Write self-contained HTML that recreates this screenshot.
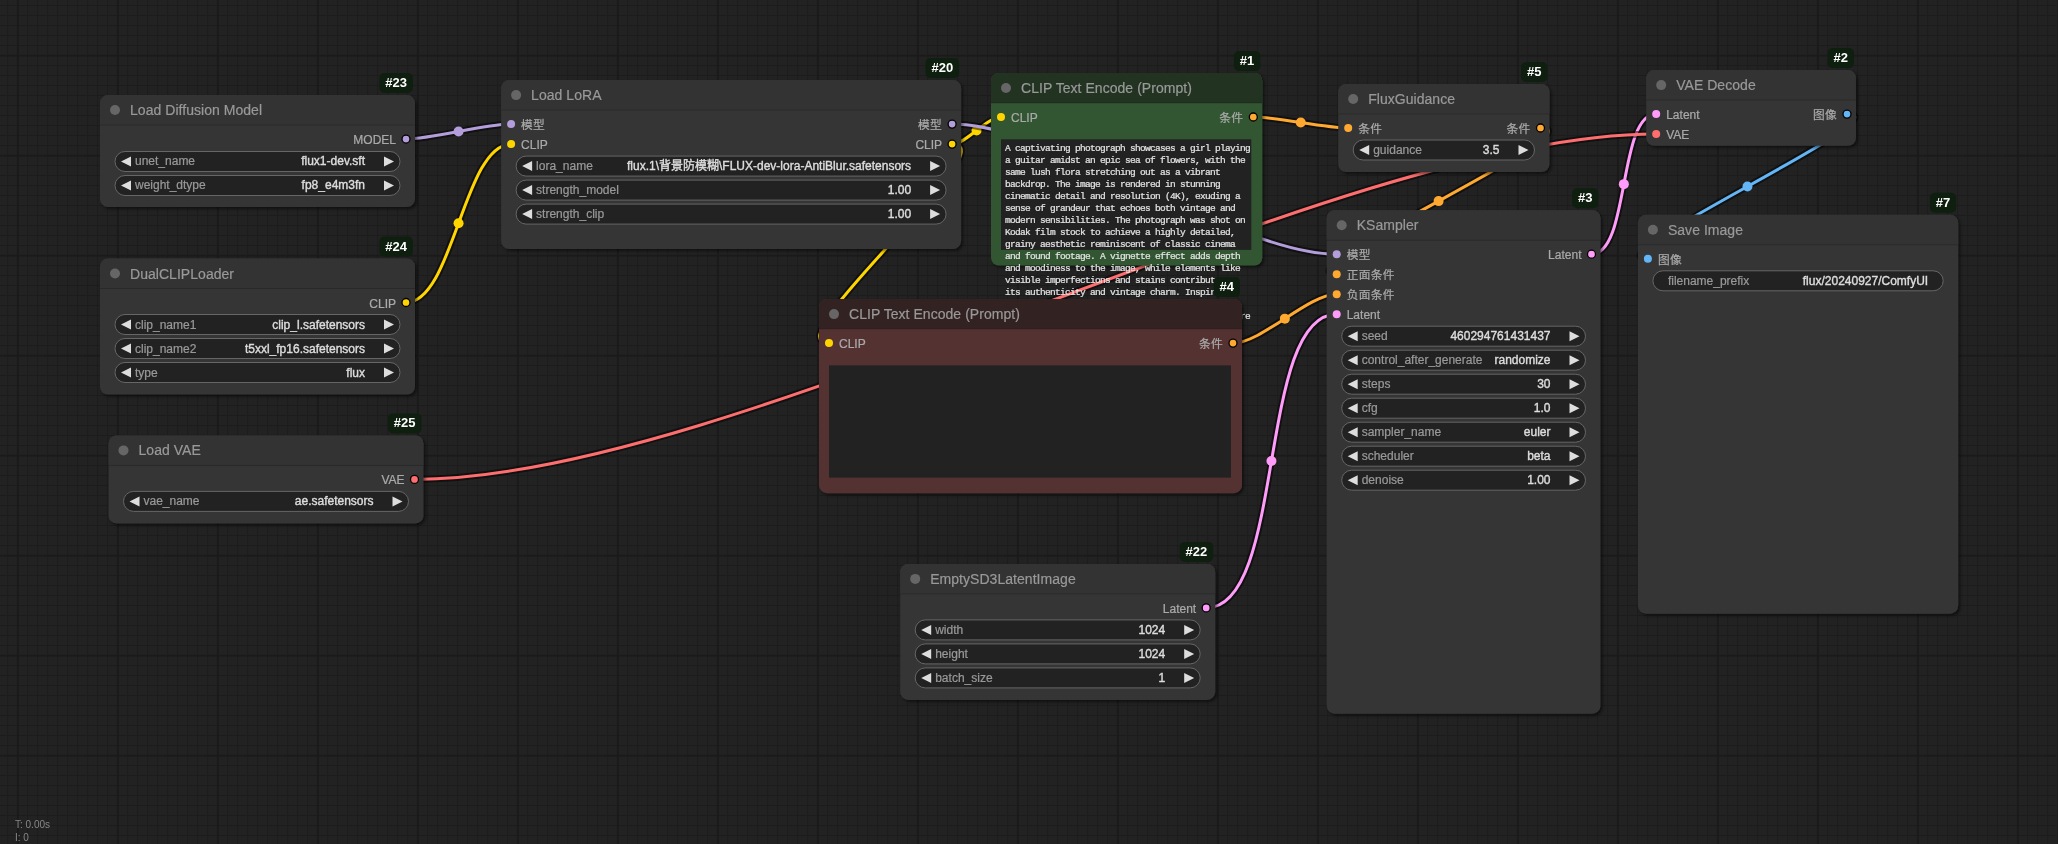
<!DOCTYPE html>
<html lang="zh-CN"><head><meta charset="utf-8"><title>ComfyUI</title>
<style>
html,body{margin:0;padding:0;background:#222222;overflow:hidden}
body{width:2058px;height:844px;position:relative;font-family:"Liberation Sans", "Noto Sans CJK SC", sans-serif}
#grid{position:absolute;left:0;top:0;width:2058px;height:844px;background-color:#222222;
background-image:linear-gradient(to right,#1a1a1a 0,#1a1a1a 1.6px,transparent 1.6px),linear-gradient(to bottom,#1a1a1a 0,#1a1a1a 1.6px,transparent 1.6px),linear-gradient(to right,#1c1c1c 0,#1c1c1c 1px,transparent 1px),linear-gradient(to bottom,#1c1c1c 0,#1c1c1c 1px,transparent 1px);
background-size:100px 100px,100px 100px,10px 10px,10px 10px;
background-position:16.9px 0,0 54.7px,7.2px 0,0 5px}
#edge{position:absolute;left:2056px;top:0;width:1.2px;height:844px;background:#222222}
svg{position:absolute;left:0;top:0;will-change:transform}
text{font-family:"Liberation Sans", "Noto Sans CJK SC", sans-serif;font-size:12px}
.t{font-size:14px;fill:#999;stroke:#999;stroke-width:.2px;letter-spacing:.04px}
.s{fill:#aaa;stroke:#aaa;stroke-width:.22px}.e{text-anchor:end}
.c{font-size:11.7px;letter-spacing:.3px}
.l{fill:#999;stroke:#999;stroke-width:.22px}.v{fill:#ddd;stroke:#ddd;stroke-width:.38px;text-anchor:end}
.w{fill:#222;stroke:#666;stroke-width:1}
.b{font-size:13px;font-weight:bold;fill:#fff;text-anchor:middle}
.m{font-family:"Liberation Mono", "Noto Sans CJK SC", monospace;font-size:9.5px;letter-spacing:-0.7px;fill:#e4e4e4;stroke:#e4e4e4;stroke-width:0.22px;white-space:pre}
.i{font-size:10px;fill:#888}
</style></head><body>
<div id="grid"></div><div id="edge"></div>
<svg width="2058" height="844" viewBox="0 0 2058 844" fill="none">
<defs><filter id="sh" x="-5%" y="-5%" width="110%" height="115%"><feDropShadow dx="2" dy="2" stdDeviation="1.5" flood-color="#000" flood-opacity="0.5"/></filter>
<clipPath id="tc"><rect x="0" y="0" width="2058" height="299"/><rect x="1242.5" y="299" width="40" height="40"/></clipPath>
</defs>
<g stroke-linecap="butt" stroke-linejoin="round">
<path d="M406 139.05C432.54 139.05 484.56 124.1 511.1 124.1" stroke="rgba(0,0,0,0.5)" stroke-width="7"/>
<path d="M406 139.05C432.54 139.05 484.56 124.1 511.1 124.1" stroke="#B39DDB" stroke-width="3"/>
<circle cx="458.55" cy="131.57" r="5" fill="#B39DDB"/>
<path d="M406 302.5C453.52 302.5 463.58 144.1 511.1 144.1" stroke="rgba(0,0,0,0.5)" stroke-width="7"/>
<path d="M406 302.5C453.52 302.5 463.58 144.1 511.1 144.1" stroke="#FFD500" stroke-width="3"/>
<circle cx="458.55" cy="223.3" r="5" fill="#FFD500"/>
<path d="M952.1 144.1C966.08 144.1 987.02 117 1001 117" stroke="rgba(0,0,0,0.5)" stroke-width="7"/>
<path d="M952.1 144.1C966.08 144.1 987.02 117 1001 117" stroke="#FFD500" stroke-width="3"/>
<circle cx="976.55" cy="130.55" r="5" fill="#FFD500"/>
<path d="M952.1 144.1C1010.6 144.1 770.5 343.1 829 343.1" stroke="rgba(0,0,0,0.5)" stroke-width="7"/>
<path d="M952.1 144.1C1010.6 144.1 770.5 343.1 829 343.1" stroke="#FFD500" stroke-width="3"/>
<circle cx="890.55" cy="243.6" r="5" fill="#FFD500"/>
<path d="M1253.3 117C1277.18 117 1324.32 128 1348.2 128" stroke="rgba(0,0,0,0.5)" stroke-width="7"/>
<path d="M1253.3 117C1277.18 117 1324.32 128 1348.2 128" stroke="#FFA931" stroke-width="3"/>
<circle cx="1300.75" cy="122.5" r="5" fill="#FFA931"/>
<path d="M952.1 124.1C1053.6 124.1 1235.2 254.2 1336.7 254.2" stroke="rgba(0,0,0,0.5)" stroke-width="7"/>
<path d="M952.1 124.1C1053.6 124.1 1235.2 254.2 1336.7 254.2" stroke="#B39DDB" stroke-width="3"/>
<circle cx="1144.4" cy="189.15" r="5" fill="#B39DDB"/>
<path d="M1540.5 128C1603.2 128 1274 274.2 1336.7 274.2" stroke="rgba(0,0,0,0.5)" stroke-width="7"/>
<path d="M1540.5 128C1603.2 128 1274 274.2 1336.7 274.2" stroke="#FFA931" stroke-width="3"/>
<circle cx="1438.6" cy="201.1" r="5" fill="#FFA931"/>
<path d="M1233 343.1C1261.66 343.1 1308.04 294.2 1336.7 294.2" stroke="rgba(0,0,0,0.5)" stroke-width="7"/>
<path d="M1233 343.1C1261.66 343.1 1308.04 294.2 1336.7 294.2" stroke="#FFA931" stroke-width="3"/>
<circle cx="1284.85" cy="318.65" r="5" fill="#FFA931"/>
<path d="M1206.2 607.9C1286.55 607.9 1256.35 314.2 1336.7 314.2" stroke="rgba(0,0,0,0.5)" stroke-width="7"/>
<path d="M1206.2 607.9C1286.55 607.9 1256.35 314.2 1336.7 314.2" stroke="#FF9CF9" stroke-width="3"/>
<circle cx="1271.45" cy="461.05" r="5" fill="#FF9CF9"/>
<path d="M1591.5 254.2C1630.08 254.2 1617.62 114.1 1656.2 114.1" stroke="rgba(0,0,0,0.5)" stroke-width="7"/>
<path d="M1591.5 254.2C1630.08 254.2 1617.62 114.1 1656.2 114.1" stroke="#FF9CF9" stroke-width="3"/>
<circle cx="1623.85" cy="184.15" r="5" fill="#FF9CF9"/>
<path d="M414.5 479.4C736.7 479.4 1334 134.1 1656.2 134.1" stroke="rgba(0,0,0,0.5)" stroke-width="7"/>
<path d="M414.5 479.4C736.7 479.4 1334 134.1 1656.2 134.1" stroke="#FF6E6E" stroke-width="3"/>
<circle cx="1035.35" cy="306.75" r="5" fill="#FF6E6E"/>
<path d="M1847 114.1C1908.53 114.1 1586.37 258.8 1647.9 258.8" stroke="rgba(0,0,0,0.5)" stroke-width="7"/>
<path d="M1847 114.1C1908.53 114.1 1586.37 258.8 1647.9 258.8" stroke="#64B5F6" stroke-width="3"/>
<circle cx="1747.45" cy="186.45" r="5" fill="#64B5F6"/>
</g>
<g transform="translate(100 125.05)">
<rect x="0" y="-30" width="315" height="112" rx="8" fill="#353535" filter="url(#sh)"/>
<path d="M0 0V-22a8 8 0 0 1 8-8H307a8 8 0 0 1 8 8V0z" fill="#333333"/>
<rect x="0" y="-0.5" width="315" height="1" fill="rgba(0,0,0,0.18)"/>
<circle cx="15" cy="-15" r="5" fill="#666"/>
<text x="30" y="-10" class="t">Load Diffusion Model</text>
<circle cx="306" cy="14" r="4" fill="#B39DDB" stroke="#000" stroke-width="1.3"/>
<text x="296" y="19" class="s e">MODEL</text>
<rect x="15" y="26.45" width="285" height="20" rx="10" class="w"/>
<path d="M31 31.45L21 36.45L31 41.45z" fill="#ddd"/>
<path d="M284 31.45L294 36.45L284 41.45z" fill="#ddd"/>
<text x="35" y="40.45" class="l">unet_name</text>
<text x="265" y="40.45" class="v">flux1-dev.sft</text>
<rect x="15" y="50.45" width="285" height="20" rx="10" class="w"/>
<path d="M31 55.45L21 60.45L31 65.45z" fill="#ddd"/>
<path d="M284 55.45L294 60.45L284 65.45z" fill="#ddd"/>
<text x="35" y="64.45" class="l">weight_dtype</text>
<text x="265" y="64.45" class="v">fp8_e4m3fn</text>
<rect x="279.4" y="-52" width="33.6" height="20" rx="5" fill="#0f1f0f"/>
<text x="296.2" y="-38" class="b">#23</text>
</g>
<g transform="translate(100 288.5)">
<rect x="0" y="-30" width="315" height="136" rx="8" fill="#353535" filter="url(#sh)"/>
<path d="M0 0V-22a8 8 0 0 1 8-8H307a8 8 0 0 1 8 8V0z" fill="#333333"/>
<rect x="0" y="-0.5" width="315" height="1" fill="rgba(0,0,0,0.18)"/>
<circle cx="15" cy="-15" r="5" fill="#666"/>
<text x="30" y="-10" class="t">DualCLIPLoader</text>
<circle cx="306" cy="14" r="4" fill="#FFD500" stroke="#000" stroke-width="1.3"/>
<text x="296" y="19" class="s e">CLIP</text>
<rect x="15" y="26" width="285" height="20" rx="10" class="w"/>
<path d="M31 31L21 36L31 41z" fill="#ddd"/>
<path d="M284 31L294 36L284 41z" fill="#ddd"/>
<text x="35" y="40" class="l">clip_name1</text>
<text x="265" y="40" class="v">clip_l.safetensors</text>
<rect x="15" y="50" width="285" height="20" rx="10" class="w"/>
<path d="M31 55L21 60L31 65z" fill="#ddd"/>
<path d="M284 55L294 60L284 65z" fill="#ddd"/>
<text x="35" y="64" class="l">clip_name2</text>
<text x="265" y="64" class="v">t5xxl_fp16.safetensors</text>
<rect x="15" y="74" width="285" height="20" rx="10" class="w"/>
<path d="M31 79L21 84L31 89z" fill="#ddd"/>
<path d="M284 79L294 84L284 89z" fill="#ddd"/>
<text x="35" y="88" class="l">type</text>
<text x="265" y="88" class="v">flux</text>
<rect x="279.4" y="-52" width="33.6" height="20" rx="5" fill="#0f1f0f"/>
<text x="296.2" y="-38" class="b">#24</text>
</g>
<g transform="translate(108.5 465.4)">
<rect x="0" y="-30" width="315" height="88" rx="8" fill="#353535" filter="url(#sh)"/>
<path d="M0 0V-22a8 8 0 0 1 8-8H307a8 8 0 0 1 8 8V0z" fill="#333333"/>
<rect x="0" y="-0.5" width="315" height="1" fill="rgba(0,0,0,0.18)"/>
<circle cx="15" cy="-15" r="5" fill="#666"/>
<text x="30" y="-10" class="t">Load VAE</text>
<circle cx="306" cy="14" r="4" fill="#FF6E6E" stroke="#000" stroke-width="1.3"/>
<text x="296" y="19" class="s e">VAE</text>
<rect x="15" y="26" width="285" height="20" rx="10" class="w"/>
<path d="M31 31L21 36L31 41z" fill="#ddd"/>
<path d="M284 31L294 36L284 41z" fill="#ddd"/>
<text x="35" y="40" class="l">vae_name</text>
<text x="265" y="40" class="v">ae.safetensors</text>
<rect x="279.4" y="-52" width="33.6" height="20" rx="5" fill="#0f1f0f"/>
<text x="296.2" y="-38" class="b">#25</text>
</g>
<g transform="translate(501.1 110.1)">
<rect x="0" y="-30" width="460" height="169" rx="8" fill="#353535" filter="url(#sh)"/>
<path d="M0 0V-22a8 8 0 0 1 8-8H452a8 8 0 0 1 8 8V0z" fill="#333333"/>
<rect x="0" y="-0.5" width="460" height="1" fill="rgba(0,0,0,0.18)"/>
<circle cx="15" cy="-15" r="5" fill="#666"/>
<text x="30" y="-10" class="t">Load LoRA</text>
<circle cx="10" cy="14" r="4" fill="#B39DDB"/>
<text x="20" y="19" class="s c">模型</text>
<circle cx="10" cy="34" r="4" fill="#FFD500"/>
<text x="20" y="39" class="s">CLIP</text>
<circle cx="451" cy="14" r="4" fill="#B39DDB" stroke="#000" stroke-width="1.3"/>
<text x="441" y="19" class="s e c">模型</text>
<circle cx="451" cy="34" r="4" fill="#FFD500" stroke="#000" stroke-width="1.3"/>
<text x="441" y="39" class="s e">CLIP</text>
<rect x="15" y="46" width="430" height="20" rx="10" class="w"/>
<path d="M31 51L21 56L31 61z" fill="#ddd"/>
<path d="M429 51L439 56L429 61z" fill="#ddd"/>
<text x="35" y="60" class="l">lora_name</text>
<text x="410" y="60" class="v">flux.1\背景防模糊\FLUX-dev-lora-AntiBlur.safetensors</text>
<rect x="15" y="70" width="430" height="20" rx="10" class="w"/>
<path d="M31 75L21 80L31 85z" fill="#ddd"/>
<path d="M429 75L439 80L429 85z" fill="#ddd"/>
<text x="35" y="84" class="l">strength_model</text>
<text x="410" y="84" class="v">1.00</text>
<rect x="15" y="94" width="430" height="20" rx="10" class="w"/>
<path d="M31 99L21 104L31 109z" fill="#ddd"/>
<path d="M429 99L439 104L429 109z" fill="#ddd"/>
<text x="35" y="108" class="l">strength_clip</text>
<text x="410" y="108" class="v">1.00</text>
<rect x="424.4" y="-52" width="33.6" height="20" rx="5" fill="#0f1f0f"/>
<text x="441.2" y="-38" class="b">#20</text>
</g>
<g transform="translate(991 103)">
<rect x="0" y="-30" width="271.3" height="192.5" rx="8" fill="#335533" filter="url(#sh)"/>
<path d="M0 0V-22a8 8 0 0 1 8-8H263.3a8 8 0 0 1 8 8V0z" fill="#223322"/>
<rect x="0" y="-0.5" width="271.3" height="1" fill="rgba(0,0,0,0.18)"/>
<circle cx="15" cy="-15" r="5" fill="#666"/>
<text x="30" y="-10" class="t">CLIP Text Encode (Prompt)</text>
<circle cx="10" cy="14" r="4" fill="#FFD500"/>
<text x="20" y="19" class="s">CLIP</text>
<circle cx="262.3" cy="14" r="4" fill="#FFA931" stroke="#000" stroke-width="1.3"/>
<text x="252.3" y="19" class="s e c">条件</text>
<rect x="242.9" y="-52" width="26.4" height="20" rx="5" fill="#0f1f0f"/>
<text x="256.1" y="-38" class="b">#1</text>
</g>
<g transform="translate(1338.2 114)">
<rect x="0" y="-30" width="211.3" height="88" rx="8" fill="#353535" filter="url(#sh)"/>
<path d="M0 0V-22a8 8 0 0 1 8-8H203.3a8 8 0 0 1 8 8V0z" fill="#333333"/>
<rect x="0" y="-0.5" width="211.3" height="1" fill="rgba(0,0,0,0.18)"/>
<circle cx="15" cy="-15" r="5" fill="#666"/>
<text x="30" y="-10" class="t">FluxGuidance</text>
<circle cx="10" cy="14" r="4" fill="#FFA931"/>
<text x="20" y="19" class="s c">条件</text>
<circle cx="202.3" cy="14" r="4" fill="#FFA931" stroke="#000" stroke-width="1.3"/>
<text x="192.3" y="19" class="s e c">条件</text>
<rect x="15" y="26" width="181.3" height="20" rx="10" class="w"/>
<path d="M31 31L21 36L31 41z" fill="#ddd"/>
<path d="M180.3 31L190.3 36L180.3 41z" fill="#ddd"/>
<text x="35" y="40" class="l">guidance</text>
<text x="161.3" y="40" class="v">3.5</text>
<rect x="182.9" y="-52" width="26.4" height="20" rx="5" fill="#0f1f0f"/>
<text x="196.1" y="-38" class="b">#5</text>
</g>
<g transform="translate(1326.7 240.2)">
<rect x="0" y="-30" width="273.8" height="503.5" rx="8" fill="#353535" filter="url(#sh)"/>
<path d="M0 0V-22a8 8 0 0 1 8-8H265.8a8 8 0 0 1 8 8V0z" fill="#333333"/>
<rect x="0" y="-0.5" width="273.8" height="1" fill="rgba(0,0,0,0.18)"/>
<circle cx="15" cy="-15" r="5" fill="#666"/>
<text x="30" y="-10" class="t">KSampler</text>
<circle cx="10" cy="14" r="4" fill="#B39DDB"/>
<text x="20" y="19" class="s c">模型</text>
<circle cx="10" cy="34" r="4" fill="#FFA931"/>
<text x="20" y="39" class="s c">正面条件</text>
<circle cx="10" cy="54" r="4" fill="#FFA931"/>
<text x="20" y="59" class="s c">负面条件</text>
<circle cx="10" cy="74" r="4" fill="#FF9CF9"/>
<text x="20" y="79" class="s">Latent</text>
<circle cx="264.8" cy="14" r="4" fill="#FF9CF9" stroke="#000" stroke-width="1.3"/>
<text x="254.8" y="19" class="s e">Latent</text>
<rect x="15" y="86" width="243.8" height="20" rx="10" class="w"/>
<path d="M31 91L21 96L31 101z" fill="#ddd"/>
<path d="M242.8 91L252.8 96L242.8 101z" fill="#ddd"/>
<text x="35" y="100" class="l">seed</text>
<text x="223.8" y="100" class="v">460294761431437</text>
<rect x="15" y="110" width="243.8" height="20" rx="10" class="w"/>
<path d="M31 115L21 120L31 125z" fill="#ddd"/>
<path d="M242.8 115L252.8 120L242.8 125z" fill="#ddd"/>
<text x="35" y="124" class="l">control_after_generate</text>
<text x="223.8" y="124" class="v">randomize</text>
<rect x="15" y="134" width="243.8" height="20" rx="10" class="w"/>
<path d="M31 139L21 144L31 149z" fill="#ddd"/>
<path d="M242.8 139L252.8 144L242.8 149z" fill="#ddd"/>
<text x="35" y="148" class="l">steps</text>
<text x="223.8" y="148" class="v">30</text>
<rect x="15" y="158" width="243.8" height="20" rx="10" class="w"/>
<path d="M31 163L21 168L31 173z" fill="#ddd"/>
<path d="M242.8 163L252.8 168L242.8 173z" fill="#ddd"/>
<text x="35" y="172" class="l">cfg</text>
<text x="223.8" y="172" class="v">1.0</text>
<rect x="15" y="182" width="243.8" height="20" rx="10" class="w"/>
<path d="M31 187L21 192L31 197z" fill="#ddd"/>
<path d="M242.8 187L252.8 192L242.8 197z" fill="#ddd"/>
<text x="35" y="196" class="l">sampler_name</text>
<text x="223.8" y="196" class="v">euler</text>
<rect x="15" y="206" width="243.8" height="20" rx="10" class="w"/>
<path d="M31 211L21 216L31 221z" fill="#ddd"/>
<path d="M242.8 211L252.8 216L242.8 221z" fill="#ddd"/>
<text x="35" y="220" class="l">scheduler</text>
<text x="223.8" y="220" class="v">beta</text>
<rect x="15" y="230" width="243.8" height="20" rx="10" class="w"/>
<path d="M31 235L21 240L31 245z" fill="#ddd"/>
<path d="M242.8 235L252.8 240L242.8 245z" fill="#ddd"/>
<text x="35" y="244" class="l">denoise</text>
<text x="223.8" y="244" class="v">1.00</text>
<rect x="245.4" y="-52" width="26.4" height="20" rx="5" fill="#0f1f0f"/>
<text x="258.6" y="-38" class="b">#3</text>
</g>
<g transform="translate(1646.2 100.1)">
<rect x="0" y="-30" width="209.8" height="75.7" rx="8" fill="#353535" filter="url(#sh)"/>
<path d="M0 0V-22a8 8 0 0 1 8-8H201.8a8 8 0 0 1 8 8V0z" fill="#333333"/>
<rect x="0" y="-0.5" width="209.8" height="1" fill="rgba(0,0,0,0.18)"/>
<circle cx="15" cy="-15" r="5" fill="#666"/>
<text x="30" y="-10" class="t">VAE Decode</text>
<circle cx="10" cy="14" r="4" fill="#FF9CF9"/>
<text x="20" y="19" class="s">Latent</text>
<circle cx="10" cy="34" r="4" fill="#FF6E6E"/>
<text x="20" y="39" class="s">VAE</text>
<circle cx="200.8" cy="14" r="4" fill="#64B5F6" stroke="#000" stroke-width="1.3"/>
<text x="190.8" y="19" class="s e c">图像</text>
<rect x="181.4" y="-52" width="26.4" height="20" rx="5" fill="#0f1f0f"/>
<text x="194.6" y="-38" class="b">#2</text>
</g>
<g transform="translate(1637.9 244.8)">
<rect x="0" y="-30" width="320.3" height="398.9" rx="8" fill="#353535" filter="url(#sh)"/>
<path d="M0 0V-22a8 8 0 0 1 8-8H312.3a8 8 0 0 1 8 8V0z" fill="#333333"/>
<rect x="0" y="-0.5" width="320.3" height="1" fill="rgba(0,0,0,0.18)"/>
<circle cx="15" cy="-15" r="5" fill="#666"/>
<text x="30" y="-10" class="t">Save Image</text>
<circle cx="10" cy="14" r="4" fill="#64B5F6"/>
<text x="20" y="19" class="s c">图像</text>
<rect x="15" y="26" width="290.3" height="20" rx="10" class="w"/>
<text x="30" y="40" class="l">filename_prefix</text>
<text x="290.3" y="40" class="v">flux/20240927/ComfyUI</text>
<rect x="291.9" y="-52" width="26.4" height="20" rx="5" fill="#0f1f0f"/>
<text x="305.1" y="-38" class="b">#7</text>
</g>
<g transform="translate(900.2 593.9)">
<rect x="0" y="-30" width="315" height="136" rx="8" fill="#353535" filter="url(#sh)"/>
<path d="M0 0V-22a8 8 0 0 1 8-8H307a8 8 0 0 1 8 8V0z" fill="#333333"/>
<rect x="0" y="-0.5" width="315" height="1" fill="rgba(0,0,0,0.18)"/>
<circle cx="15" cy="-15" r="5" fill="#666"/>
<text x="30" y="-10" class="t">EmptySD3LatentImage</text>
<circle cx="306" cy="14" r="4" fill="#FF9CF9" stroke="#000" stroke-width="1.3"/>
<text x="296" y="19" class="s e">Latent</text>
<rect x="15" y="26" width="285" height="20" rx="10" class="w"/>
<path d="M31 31L21 36L31 41z" fill="#ddd"/>
<path d="M284 31L294 36L284 41z" fill="#ddd"/>
<text x="35" y="40" class="l">width</text>
<text x="265" y="40" class="v">1024</text>
<rect x="15" y="50" width="285" height="20" rx="10" class="w"/>
<path d="M31 55L21 60L31 65z" fill="#ddd"/>
<path d="M284 55L294 60L284 65z" fill="#ddd"/>
<text x="35" y="64" class="l">height</text>
<text x="265" y="64" class="v">1024</text>
<rect x="15" y="74" width="285" height="20" rx="10" class="w"/>
<path d="M31 79L21 84L31 89z" fill="#ddd"/>
<path d="M284 79L294 84L284 89z" fill="#ddd"/>
<text x="35" y="88" class="l">batch_size</text>
<text x="265" y="88" class="v">1</text>
<rect x="279.4" y="-52" width="33.6" height="20" rx="5" fill="#0f1f0f"/>
<text x="296.2" y="-38" class="b">#22</text>
</g>
<g clip-path="url(#tc)">
<rect x="1001" y="139.3" width="250.3" height="110.6" fill="#222"/>
<text class="m" x="1005" y="139.3">
<tspan x="1005" y="151.1">A captivating photograph showcases a girl playing</tspan>
<tspan x="1005" y="163.1">a guitar amidst an epic sea of flowers, with the</tspan>
<tspan x="1005" y="175.1">same lush flora stretching out as a vibrant</tspan>
<tspan x="1005" y="187.1">backdrop. The image is rendered in stunning</tspan>
<tspan x="1005" y="199.1">cinematic detail and resolution (4K), exuding a</tspan>
<tspan x="1005" y="211.1">sense of grandeur that echoes both vintage and</tspan>
<tspan x="1005" y="223.1">modern sensibilities. The photograph was shot on</tspan>
<tspan x="1005" y="235.1">Kodak film stock to achieve a highly detailed,</tspan>
<tspan x="1005" y="247.1">grainy aesthetic reminiscent of classic cinema</tspan>
<tspan x="1005" y="259.1">and found footage. A vignette effect adds depth</tspan>
<tspan x="1005" y="271.1">and moodiness to the image, while elements like</tspan>
<tspan x="1005" y="283.1">visible imperfections and stains contribute to</tspan>
<tspan x="1005" y="295.1">its authenticity and vintage charm. Inspired</tspan>
</text>
<text class="m" x="1240" y="319.1">re</text>
</g>
<g transform="translate(819 329.1)">
<rect x="0" y="-30" width="423" height="194.1" rx="8" fill="#553333" filter="url(#sh)"/>
<path d="M0 0V-22a8 8 0 0 1 8-8H415a8 8 0 0 1 8 8V0z" fill="#332222"/>
<rect x="0" y="-0.5" width="423" height="1" fill="rgba(0,0,0,0.18)"/>
<circle cx="15" cy="-15" r="5" fill="#666"/>
<text x="30" y="-10" class="t">CLIP Text Encode (Prompt)</text>
<circle cx="10" cy="14" r="4" fill="#FFD500"/>
<text x="20" y="19" class="s">CLIP</text>
<circle cx="414" cy="14" r="4" fill="#FFA931" stroke="#000" stroke-width="1.3"/>
<text x="404" y="19" class="s e c">条件</text>
<rect x="394.6" y="-52" width="26.4" height="20" rx="5" fill="#0f1f0f"/>
<text x="407.8" y="-38" class="b">#4</text>
</g>
<rect x="829" y="365.4" width="402" height="112.2" fill="#222"/>
<text x="15" y="828" class="i">T: 0.00s</text>
<text x="15" y="841" class="i">I: 0</text>
</svg>
</body></html>
